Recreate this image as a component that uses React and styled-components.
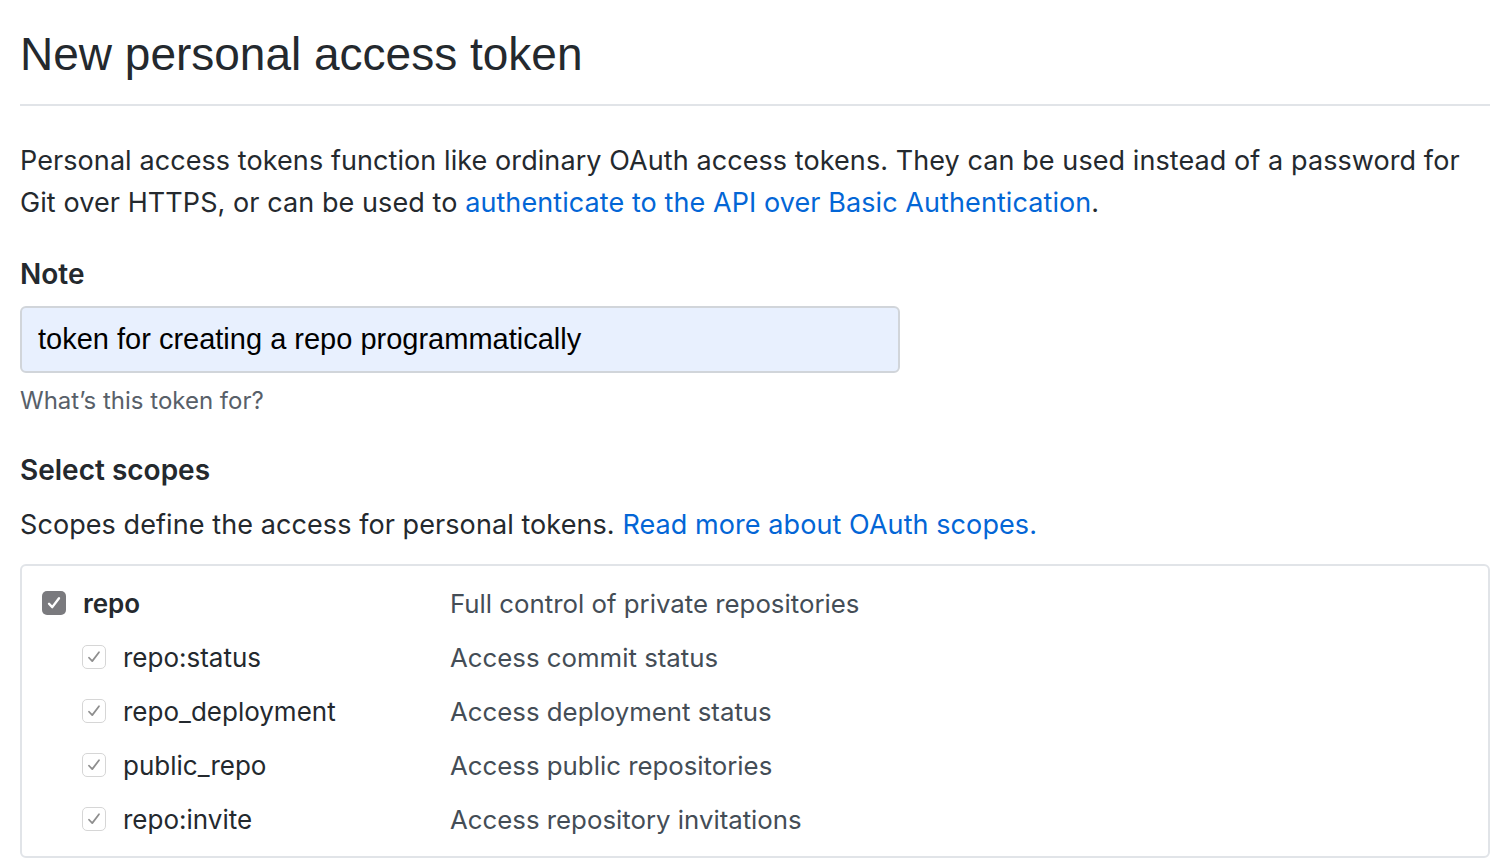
import React from "react";
import styled, { createGlobalStyle } from "styled-components";

const Global = createGlobalStyle`
  html, body { margin: 0; padding: 0; background: #fff; }
  body { font-family: Inter, "Noto Sans", sans-serif; color: #24292e; }
  * { box-sizing: border-box; }
`;

const Page = styled.div`
  padding: 0 14px 0 20px;
  width: 1504px;
`;

const Header = styled.div`
  padding-top: 24px;
  padding-bottom: 20px;
  border-bottom: 2px solid #e1e4e8;
  margin-bottom: 34px;
`;

const Title = styled.h1`
  margin: 0;
  font-family: "Liberation Sans", Arial, sans-serif;
  font-weight: 400;
  font-size: 46px;
  line-height: 60px;
  color: #24292e;
`;

const Lead = styled.p`
  margin: 0 0 ${(p) => (p.$last ? "0" : "29px")};
  font-size: 27px;
  letter-spacing: 0.08px;
  line-height: 42px;
  color: #24292e;
`;

const Link = styled.a`
  color: #0366d6;
  text-decoration: none;
`;

const Label = styled.div`
  font-size: 28px;
  font-weight: 600;
  line-height: 42px;
  margin-bottom: ${(p) => (p.$wide ? "13px" : "11px")};
`;

const Input = styled.div`
  width: 880px;
  height: 67px;
  background: #e8f0fe;
  border: 2px solid #d1d5da;
  border-radius: 6px;
  padding: 0 16px 0 16px;
  display: flex;
  align-items: center;
  font-family: "Liberation Sans", Arial, sans-serif;
  font-size: 29px;
  color: #000;
`;

const Note = styled.div`
  font-size: 24px;
  line-height: 36px;
  color: #586069;
  margin-top: 10px;
  margin-bottom: 30px;
`;

const Box = styled.div`
  margin-top: 18px;
  border: 2px solid #e1e4e8;
  border-radius: 6px;
  padding: 10px 20px 10px;
`;

const Row = styled.div`
  display: grid;
  grid-template-columns: 408px 1fr;
  align-items: center;
  height: 54px;
`;

const Name = styled.div`
  display: flex;
  align-items: center;
  gap: 17px;
  padding-left: ${(p) => (p.$sub ? "40px" : "0")};
  font-size: 26px;
  font-weight: ${(p) => (p.$sub ? 400 : 600)};
  color: #24292e;
`;

const Desc = styled.div`
  font-size: 25.8px;
  color: #444d56;
`;

const Check = styled.span`
  width: 24px;
  height: 24px;
  border-radius: 5px;
  flex: none;
  display: inline-flex;
  align-items: center;
  justify-content: center;
  background: ${(p) => (p.$filled ? "#7a7a7e" : "#fff")};
  border: ${(p) => (p.$filled ? "none" : "1.5px solid #d6d6d6")};
`;

const CheckBox = ({ filled }) => (
  <Check $filled={filled}>
    <svg width="20" height="20" viewBox="0 0 16 16">
      <path
        d="M4 8.6 L6.6 11.3 L12 4.2"
        fill="none"
        stroke={filled ? "#fff" : "#8e8e8e"}
        strokeWidth={filled ? 1.9 : 1.4}
        strokeLinecap="round"
        strokeLinejoin="round"
      />
    </svg>
  </Check>
);

const scopes = [
  { name: "repo", desc: "Full control of private repositories", sub: false },
  { name: "repo:status", desc: "Access commit status", sub: true },
  { name: "repo_deployment", desc: "Access deployment status", sub: true },
  { name: "public_repo", desc: "Access public repositories", sub: true },
  { name: "repo:invite", desc: "Access repository invitations", sub: true },
];

export default function App() {
  return (
    <>
      <Global />
      <Page>
        <Header>
          <Title>New personal access token</Title>
        </Header>
        <Lead>
          Personal access tokens function like ordinary OAuth access tokens. They can be used instead of a password for
          Git over HTTPS, or can be used to{" "}
          <Link href="#">authenticate to the API over Basic Authentication</Link>.
        </Lead>
        <Label>Note</Label>
        <Input>token for creating a repo programmatically</Input>
        <Note>What’s this token for?</Note>
        <Label $wide>Select scopes</Label>
        <Lead as="div" $last>
          Scopes define the access for personal tokens. <Link href="#">Read more about OAuth scopes.</Link>
        </Lead>
        <Box>
          {scopes.map((s) => (
            <Row key={s.name}>
              <Name $sub={s.sub}>
                <CheckBox filled={!s.sub} />
                {s.name}
              </Name>
              <Desc>{s.desc}</Desc>
            </Row>
          ))}
        </Box>
      </Page>
    </>
  );
}
